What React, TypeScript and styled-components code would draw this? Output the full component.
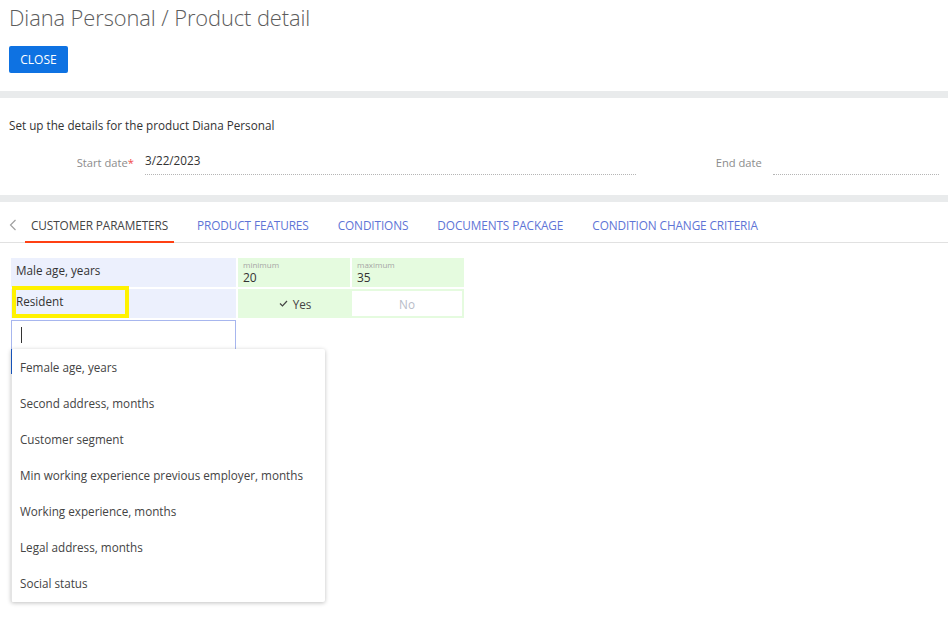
import React from "react";
import styled, { createGlobalStyle } from "styled-components";

const Global = createGlobalStyle`
  html, body { margin: 0; padding: 0; background: #fff; }
  body { font-family: "Open Sans", "Noto Sans", sans-serif; color: #444; }
  * { box-sizing: border-box; }
`;

const Page = styled.div`
  width: 948px;
  height: 627px;
  overflow: hidden;
  position: relative;
`;

const Header = styled.header`
  padding: 4px 9px 18px;
`;

const Title = styled.h1`
  margin: 0;
  font-size: 21.9px;
  font-weight: 300;
  color: #5c5c5c;
  line-height: 28px;
  letter-spacing: -0.1px;
`;

const CloseButton = styled.button`
  margin-top: 14px;
  width: 59px;
  height: 27px;
  border: none;
  border-radius: 2px;
  background: #0e72e2;
  color: #fff;
  font-family: inherit;
  font-size: 12px;
  padding: 0;
  cursor: pointer;
`;

const Band = styled.div`
  height: 7px;
  background: #e9ebec;
`;

const Details = styled.section`
  padding: 19px 9px 20px;
`;

const Description = styled.p`
  margin: 0;
  font-size: 11.7px;
  color: #333;
  line-height: 17px;
`;

const FieldsRow = styled.div`
  display: flex;
  align-items: flex-end;
  margin-top: 18px;
`;

const Field = styled.div<{ $labelWidth: number; $width: number }>`
  display: flex;
  align-items: flex-end;
  width: ${(p) => p.$width}px;
  & > label {
    width: ${(p) => p.$labelWidth}px;
  }
`;

const Label = styled.label`
  flex: none;
  text-align: right;
  padding-right: 11px;
  font-size: 11.2px;
  color: #8c8c8c;
  line-height: 16px;
  padding-bottom: 4px;
`;

const Required = styled.span`
  color: #f04a4a;
`;

const Value = styled.div`
  flex: 1;
  font-size: 11.7px;
  color: #333;
  line-height: 16px;
  padding: 0 0 6px 0;
  border-bottom: 1px dotted #b5b5b5;
  min-height: 23px;
`;

const TabBar = styled.nav`
  display: flex;
  align-items: stretch;
  height: 41px;
  border-bottom: 1px solid #e1e1e1;
`;

const TabArrow = styled.div`
  width: 25px;
  display: flex;
  align-items: center;
  justify-content: center;
  padding-top: 6px;
`;

const Tab = styled.div<{ $active?: boolean }>`
  display: flex;
  align-items: center;
  padding: 7px 6px 0;
  margin-right: 17px;
  font-size: 11.8px;
  letter-spacing: -0.1px;
  color: ${(p) => (p.$active ? "#444" : "#5e74d6")};
  border-bottom: 2px solid ${(p) => (p.$active ? "#ff4013" : "transparent")};
  margin-bottom: -1px;
  white-space: nowrap;
`;

const Content = styled.div`
  padding: 15px 11px 0;
  position: relative;
`;

const ParamGrid = styled.div`
  display: grid;
  grid-template-columns: 225px 112px 112px;
  grid-template-rows: 29px 29px;
  column-gap: 2px;
  row-gap: 2px;
  width: 453px;
`;

const NameCell = styled.div`
  background: #ecf0fd;
  font-size: 11.7px;
  color: #333;
  padding: 4px 5px;
  line-height: 17px;
  position: relative;
`;

const RangeCell = styled.div`
  background: #e5fbdf;
  padding: 1px 5px;
  display: flex;
  flex-direction: column;
`;

const RangeCaption = styled.span`
  font-size: 8px;
  color: #a5a5a5;
  line-height: 11px;
`;

const RangeValue = styled.span`
  font-size: 12px;
  color: #333;
  line-height: 15px;
`;

const Toggle = styled.div`
  grid-column: 2 / span 2;
  display: grid;
  grid-template-columns: 114px 1fr;
  background: #e5fbdf;
  padding: 2px;
  padding-left: 0;
`;

const ToggleOption = styled.div<{ $selected?: boolean }>`
  display: flex;
  align-items: center;
  justify-content: center;
  gap: 5px;
  font-size: 11.7px;
  color: ${(p) => (p.$selected ? "#444" : "#b8bcc8")};
  background: ${(p) => (p.$selected ? "transparent" : "#fff")};
`;

const Highlight = styled.div`
  position: absolute;
  left: 1px;
  top: -3px;
  width: 117px;
  height: 32px;
  border: 4px solid #fff200;
  pointer-events: none;
`;

const SearchInput = styled.div`
  margin-top: 2px;
  width: 225px;
  height: 30px;
  border: 1px solid #a7b6ee;
  background: #fff;
  display: flex;
  align-items: center;
  padding-left: 9px;
`;

const Caret = styled.span`
  width: 1px;
  height: 16px;
  background: #333;
`;

const Dropdown = styled.ul`
  position: absolute;
  left: 11px;
  top: 106px;
  width: 314px;
  margin: 0;
  padding: 0 0 1px;
  list-style: none;
  background: #fff;
  border-radius: 2px;
  box-shadow: 0 1px 4px rgba(0, 0, 0, 0.25);
  border-left: 1px solid #1652b8;
  border-image: linear-gradient(to bottom, #1652b8 0, #1652b8 26px, #e4e4e4 26px, #e4e4e4 100%) 1;
  border-right: none;
  border-top: none;
  border-bottom: none;
`;

const DropdownItem = styled.li`
  height: 36px;
  display: flex;
  align-items: center;
  padding-left: 8px;
  font-size: 11.7px;
  color: #444;
  white-space: nowrap;
`;

const options = [
  "Female age, years",
  "Second address, months",
  "Customer segment",
  "Min working experience previous employer, months",
  "Working experience, months",
  "Legal address, months",
  "Social status",
];

const tabs = [
  "CUSTOMER PARAMETERS",
  "PRODUCT FEATURES",
  "CONDITIONS",
  "DOCUMENTS PACKAGE",
  "CONDITION CHANGE CRITERIA",
];

export default function App() {
  return (
    <Page>
      <Global />
      <Header>
        <Title>Diana Personal / Product detail</Title>
        <CloseButton>CLOSE</CloseButton>
      </Header>
      <Band />
      <Details>
        <Description>Set up the details for the product Diana Personal</Description>
        <FieldsRow>
          <Field $labelWidth={136} $width={639}>
            <Label>
              Start date<Required>*</Required>
            </Label>
            <Value>3/22/2023</Value>
          </Field>
          <Field $labelWidth={137} $width={309}>
            <Label>End date</Label>
            <Value />
          </Field>
        </FieldsRow>
      </Details>
      <Band />
      <TabBar>
        <TabArrow>
          <svg width="8" height="12" viewBox="0 0 8 12">
            <path d="M6.5 1 L1.5 6 L6.5 11" fill="none" stroke="#a0a0a0" strokeWidth="1.2" />
          </svg>
        </TabArrow>
        {tabs.map((t, i) => (
          <Tab key={t} $active={i === 0}>
            {t}
          </Tab>
        ))}
      </TabBar>
      <Content>
        <ParamGrid>
          <NameCell>Male age, years</NameCell>
          <RangeCell>
            <RangeCaption>minimum</RangeCaption>
            <RangeValue>20</RangeValue>
          </RangeCell>
          <RangeCell>
            <RangeCaption>maximum</RangeCaption>
            <RangeValue>35</RangeValue>
          </RangeCell>
          <NameCell>
            Resident
            <Highlight />
          </NameCell>
          <Toggle>
            <ToggleOption $selected>
              <svg width="9" height="7" viewBox="0 0 9 7">
                <path d="M1 3.5 L3.5 6 L8 1" fill="none" stroke="#444" strokeWidth="1.2" />
              </svg>
              Yes
            </ToggleOption>
            <ToggleOption>No</ToggleOption>
          </Toggle>
        </ParamGrid>
        <SearchInput>
          <Caret />
        </SearchInput>
        <Dropdown>
          {options.map((o) => (
            <DropdownItem key={o}>{o}</DropdownItem>
          ))}
        </Dropdown>
      </Content>
    </Page>
  );
}
